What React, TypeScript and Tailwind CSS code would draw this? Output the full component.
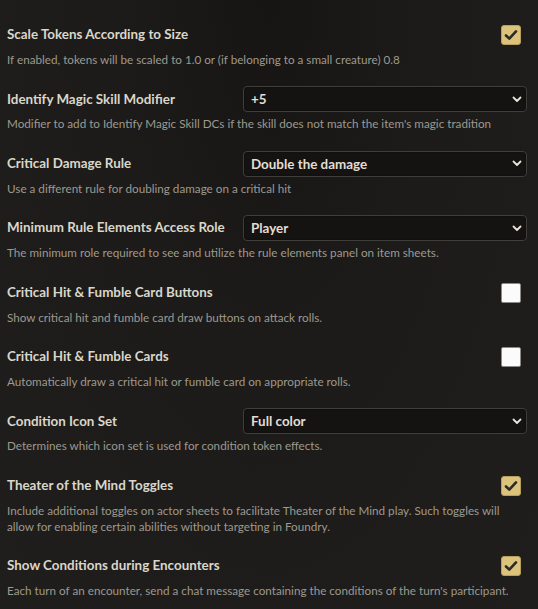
import React from "react";

type Row =
  | { kind: "check"; label: string; desc: React.ReactNode; checked: boolean }
  | { kind: "select"; label: string; desc: React.ReactNode; value: string };

const rows: Row[] = [
  {
    kind: "check",
    label: "Scale Tokens According to Size",
    desc: "If enabled, tokens will be scaled to 1.0 or (if belonging to a small creature) 0.8",
    checked: true,
  },
  {
    kind: "select",
    label: "Identify Magic Skill Modifier",
    desc: "Modifier to add to Identify Magic Skill DCs if the skill does not match the item's magic tradition",
    value: "+5",
  },
  {
    kind: "select",
    label: "Critical Damage Rule",
    desc: "Use a different rule for doubling damage on a critical hit",
    value: "Double the damage",
  },
  {
    kind: "select",
    label: "Minimum Rule Elements Access Role",
    desc: "The minimum role required to see and utilize the rule elements panel on item sheets.",
    value: "Player",
  },
  {
    kind: "check",
    label: "Critical Hit & Fumble Card Buttons",
    desc: "Show critical hit and fumble card draw buttons on attack rolls.",
    checked: false,
  },
  {
    kind: "check",
    label: "Critical Hit & Fumble Cards",
    desc: "Automatically draw a critical hit or fumble card on appropriate rolls.",
    checked: false,
  },
  {
    kind: "select",
    label: "Condition Icon Set",
    desc: "Determines which icon set is used for condition token effects.",
    value: "Full color",
  },
  {
    kind: "check",
    label: "Theater of the Mind Toggles",
    desc: (
      <>
        Include additional toggles on actor sheets to facilitate Theater of the Mind play. Such toggles will
        <br />
        allow for enabling certain abilities without targeting in Foundry.
      </>
    ),
    checked: true,
  },
  {
    kind: "check",
    label: "Show Conditions during Encounters",
    desc: "Each turn of an encounter, send a chat message containing the conditions of the turn's participant.",
    checked: true,
  },
];

function Checkbox({ checked }: { checked: boolean }) {
  if (checked) {
    return (
      <div className="mr-[6px] flex h-[20px] w-[20px] items-center justify-center rounded-[3px] border border-[#b89f5c] bg-[#dcc37c]">
        <svg width="14" height="12" viewBox="0 0 14 12" fill="none">
          <path d="M2 6.5 L5.3 9.6 L12 2.4" stroke="#2b2a27" strokeWidth="2.6" strokeLinecap="round" strokeLinejoin="round" />
        </svg>
      </div>
    );
  }
  return <div className="mr-[6px] h-[20px] w-[20px] rounded-[2px] border border-[#8a8a8a] bg-[#fbfbfb]" />;
}

function Select({ value }: { value: string }) {
  return (
    <div className="flex h-[26px] w-[284px] items-center justify-between rounded-[4px] border border-[#403e3a] bg-[#141312] pl-[7px] pr-[4px] shadow-[inset_0_0_2px_rgba(0,0,0,0.6)]">
      <span className="text-[13.4px] font-bold text-[#e2ded3]">{value}</span>
      <svg width="10" height="7" viewBox="0 0 10 7" fill="none">
        <path d="M1.5 1.5 L5 5 L8.5 1.5" stroke="#e8e4da" strokeWidth="1.8" strokeLinecap="round" strokeLinejoin="round" />
      </svg>
    </div>
  );
}

export default function App() {
  return (
    <div className="min-h-[609px] w-[538px] bg-[#1c1b19] bg-[radial-gradient(ellipse_at_top,#161513_0%,#1c1b19_40%,#1f1e1c_100%)] font-['Lato',sans-serif]">
      <div className="flex flex-col gap-[19.4px] pb-4 pl-[7px] pr-[11px] pt-[22px]">
        {rows.map((r) => (
          <div key={r.label} className="flex flex-col">
            <div className="flex h-[26px] items-center justify-between">
              <span className="text-[13.4px] font-bold leading-none text-[#dad6ca]">{r.label}</span>
              {r.kind === "check" ? <Checkbox checked={r.checked} /> : <Select value={r.value} />}
            </div>
            <p className="mt-[3px] text-[11.7px] leading-[16px] text-[#9d998f]">{r.desc}</p>
          </div>
        ))}
      </div>
    </div>
  );
}
